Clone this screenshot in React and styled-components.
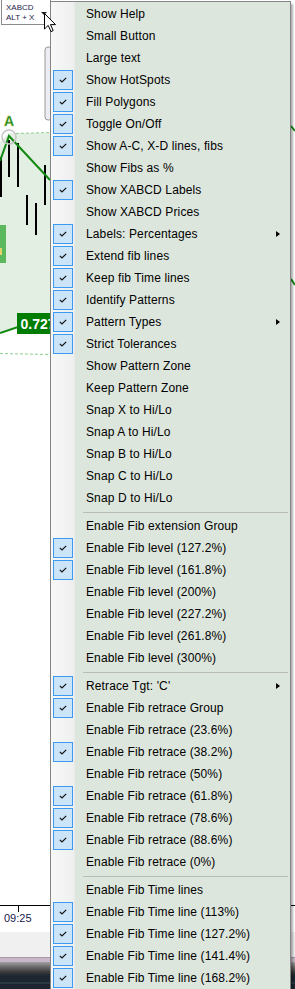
import React from "react";
import styled, { createGlobalStyle } from "styled-components";

const GlobalStyle = createGlobalStyle`
  html, body {
    margin: 0;
    padding: 0;
    background: #ffffff;
  }
  body {
    font-family: "Liberation Sans", Arial, sans-serif;
  }
`;

const Page = styled.div`
  position: relative;
  width: 295px;
  height: 989px;
  overflow: hidden;
  background: #ffffff;
  display: flex;
  flex-direction: column;
`;

const ChartCanvas = styled.svg`
  display: block;
  flex: none;
  width: 295px;
  height: 932px;
`;

const GrayStrip = styled.div`
  flex: none;
  height: 25px;
  background: #f0f0f0;
`;

const PurpleStrip = styled.div`
  flex: none;
  height: 5px;
  background: #c8b7c8;
  border-top: 1px solid #a898a8;
  box-sizing: border-box;
`;

const DarkStrip = styled.div`
  flex: 1;
  background: linear-gradient(
    to bottom,
    #a0a0a0 0,
    #6a6a6a 5px,
    #3a3a3a 10px,
    #1c2530 14px,
    #1c2530 20px,
    #3b4957 21px,
    #1c2530 22px
  );
`;

const ToolButton = styled.div`
  position: absolute;
  left: 1px;
  top: -1px;
  width: 50px;
  height: 26px;
  box-sizing: border-box;
  border: 1px solid #8a8a8a;
  background: #ffffff;
  padding: 3px 0 0 4px;
  font-size: 8px;
  line-height: 10px;
  color: #1c1c4a;
`;

const DropArrow = styled.span`
  position: absolute;
  right: 3px;
  top: 12px;
  width: 0;
  height: 0;
  border-left: 3px solid transparent;
  border-right: 3px solid transparent;
  border-top: 3px solid #222;
`;

const Cursor = styled.svg`
  position: absolute;
  left: 44px;
  top: 13px;
  width: 13px;
  height: 20px;
`;

const Menu = styled.div`
  position: absolute;
  left: 50px;
  top: 1px;
  width: 241px;
  height: 1000px;
  box-sizing: border-box;
  border: 1px solid #848484;
  padding: 1px 0;
  background: linear-gradient(
    to right,
    #f8f8f8 0,
    #efefef 22px,
    #e8e8e8 24px,
    #dde6dd 24px
  );
  box-shadow: 2px 3px 2px rgba(0, 0, 0, 0.32);
  font-family: "Liberation Sans", Arial, sans-serif;
  font-size: 12px;
  letter-spacing: 0.12px;
  color: #000000;
`;

const Item = styled.div`
  display: flex;
  align-items: center;
  height: 22px;
`;

const CheckCell = styled.div`
  flex: none;
  width: 24px;
  height: 22px;
  display: flex;
  align-items: center;
  padding-left: 2px;
  box-sizing: border-box;
`;

const CheckBox = styled.div`
  width: 20px;
  height: 20px;
  box-sizing: border-box;
  border: 1px solid #3d9af2;
  background: #cce4f8;
  display: flex;
  align-items: center;
  justify-content: center;
`;

const Label = styled.span`
  flex: 1;
  padding-left: 11px;
  white-space: nowrap;
`;

const SubArrow = styled.span`
  flex: none;
  width: 0;
  height: 0;
  margin-right: 10px;
  border-top: 3.5px solid transparent;
  border-bottom: 3.5px solid transparent;
  border-left: 4px solid #000;
`;

const Separator = styled.div`
  height: 6px;
  padding: 3px 2px 0 32px;
  box-sizing: border-box;
  &::after {
    content: "";
    display: block;
    height: 1px;
    background: #b9bcb9;
  }
`;

const SEP = "sep";

const items = [
  { label: "Show Help" },
  { label: "Small Button" },
  { label: "Large text" },
  { label: "Show HotSpots", checked: true },
  { label: "Fill Polygons", checked: true },
  { label: "Toggle On/Off", checked: true },
  { label: "Show A-C, X-D lines, fibs", checked: true },
  { label: "Show Fibs as %" },
  { label: "Show XABCD Labels", checked: true },
  { label: "Show XABCD Prices" },
  { label: "Labels: Percentages", checked: true, sub: true },
  { label: "Extend fib lines", checked: true },
  { label: "Keep fib Time lines", checked: true },
  { label: "Identify Patterns", checked: true },
  { label: "Pattern Types", checked: true, sub: true },
  { label: "Strict Tolerances", checked: true },
  { label: "Show Pattern Zone" },
  { label: "Keep Pattern Zone" },
  { label: "Snap X to Hi/Lo" },
  { label: "Snap A to Hi/Lo" },
  { label: "Snap B to Hi/Lo" },
  { label: "Snap C to Hi/Lo" },
  { label: "Snap D to Hi/Lo" },
  SEP,
  { label: "Enable Fib extension Group" },
  { label: "Enable Fib level (127.2%)", checked: true },
  { label: "Enable Fib level (161.8%)", checked: true },
  { label: "Enable Fib level (200%)" },
  { label: "Enable Fib level (227.2%)" },
  { label: "Enable Fib level (261.8%)" },
  { label: "Enable Fib level (300%)" },
  SEP,
  { label: "Retrace Tgt: 'C'", checked: true, sub: true },
  { label: "Enable Fib retrace Group", checked: true },
  { label: "Enable Fib retrace (23.6%)" },
  { label: "Enable Fib retrace (38.2%)", checked: true },
  { label: "Enable Fib retrace (50%)" },
  { label: "Enable Fib retrace (61.8%)", checked: true },
  { label: "Enable Fib retrace (78.6%)", checked: true },
  { label: "Enable Fib retrace (88.6%)", checked: true },
  { label: "Enable Fib retrace (0%)" },
  SEP,
  { label: "Enable Fib Time lines" },
  { label: "Enable Fib Time line (113%)", checked: true },
  { label: "Enable Fib Time line (127.2%)", checked: true },
  { label: "Enable Fib Time line (141.4%)", checked: true },
  { label: "Enable Fib Time line (168.2%)", checked: true },
];

const CheckMark = () => (
  <svg width="8" height="6" viewBox="0 0 8 6">
    <path d="M0.8 2.8 L3 5 L7.2 0.8" fill="none" stroke="#111" strokeWidth="1.2" />
  </svg>
);

const candles = [
  [0, 157, 197],
  [8, 140, 177],
  [17, 143, 187],
  [26, 195, 225],
  [35, 203, 235],
  [44, 165, 205],
];

const Chart = () => (
  <ChartCanvas viewBox="0 0 295 932">
    <polygon points="0,142 9,133 50,133 50,318 17,327 0,333" fill="#e3efe3" />
    <line x1="16" y1="133.5" x2="50" y2="132.5" stroke="#8fcf8f" strokeDasharray="3 2" />
    <line x1="0" y1="353.5" x2="50" y2="354.5" stroke="#8fcf8f" strokeDasharray="3 2" />
    <rect x="45" y="47" width="7" height="73" rx="3" fill="#ececf4" stroke="#9a9a9a" />
    {candles.map(([x, y1, y2]) => (
      <rect key={x} x={x} y={y1} width="2" height={y2 - y1} fill="#000" />
    ))}
    <polyline points="0,161 9,136 50,180" fill="none" stroke="#128a12" strokeWidth="2" />
    <line x1="0" y1="333" x2="18" y2="327" stroke="#128a12" strokeWidth="2" />
    <circle cx="9" cy="137" r="7" fill="none" stroke="#c4c4c4" strokeWidth="1.5" />
    <text
      x="9"
      y="126"
      textAnchor="middle"
      fontFamily="Liberation Sans, Arial, sans-serif"
      fontWeight="bold"
      fontSize="14"
      fill="#1c8c1c"
      stroke="#c8c860"
      strokeWidth="0.3"
    >
      A
    </text>
    <rect x="0" y="225" width="6" height="38" fill="#5cb85c" />
    <rect x="0" y="248" width="2" height="7" fill="#e2d36a" />
    <rect x="17" y="313" width="40" height="21" fill="#007c00" />
    <text
      x="20.5"
      y="329"
      fontFamily="Liberation Sans, Arial, sans-serif"
      fontWeight="bold"
      fontSize="14"
      fill="#ffffff"
    >
      0.727
    </text>
    <line x1="291" y1="126" x2="295" y2="131" stroke="#128a12" strokeWidth="2" />
    <line x1="291" y1="279" x2="295" y2="285" stroke="#128a12" strokeWidth="2" />
    <line x1="0" y1="905.5" x2="295" y2="905.5" stroke="#000" />
    <line x1="18.5" y1="905" x2="18.5" y2="912" stroke="#000" />
    <text
      x="4"
      y="922"
      fontFamily="Liberation Sans, Arial, sans-serif"
      fontSize="11"
      fill="#20204e"
    >
      09:25
    </text>
  </ChartCanvas>
);

export default function App() {
  return (
    <>
      <GlobalStyle />
      <Page>
        <Chart />
        <GrayStrip />
        <PurpleStrip />
        <DarkStrip />

        <ToolButton>
          XABCD
          <br />
          ALT + X
          <DropArrow />
        </ToolButton>

        <Menu>
          {items.map((item, i) =>
            item === SEP ? (
              <Separator key={i} />
            ) : (
              <Item key={i}>
                <CheckCell>
                  {item.checked && (
                    <CheckBox>
                      <CheckMark />
                    </CheckBox>
                  )}
                </CheckCell>
                <Label>{item.label}</Label>
                {item.sub && <SubArrow />}
              </Item>
            )
          )}
        </Menu>

        <Cursor viewBox="0 0 13 20">
          <path
            d="M0.5 0.5 L0.5 16 L4.2 12.4 L7 18.6 L9.2 17.6 L6.5 11.6 L11.5 11.6 Z"
            fill="#fff"
            stroke="#000"
            strokeWidth="1"
            strokeLinejoin="round"
          />
        </Cursor>
      </Page>
    </>
  );
}
